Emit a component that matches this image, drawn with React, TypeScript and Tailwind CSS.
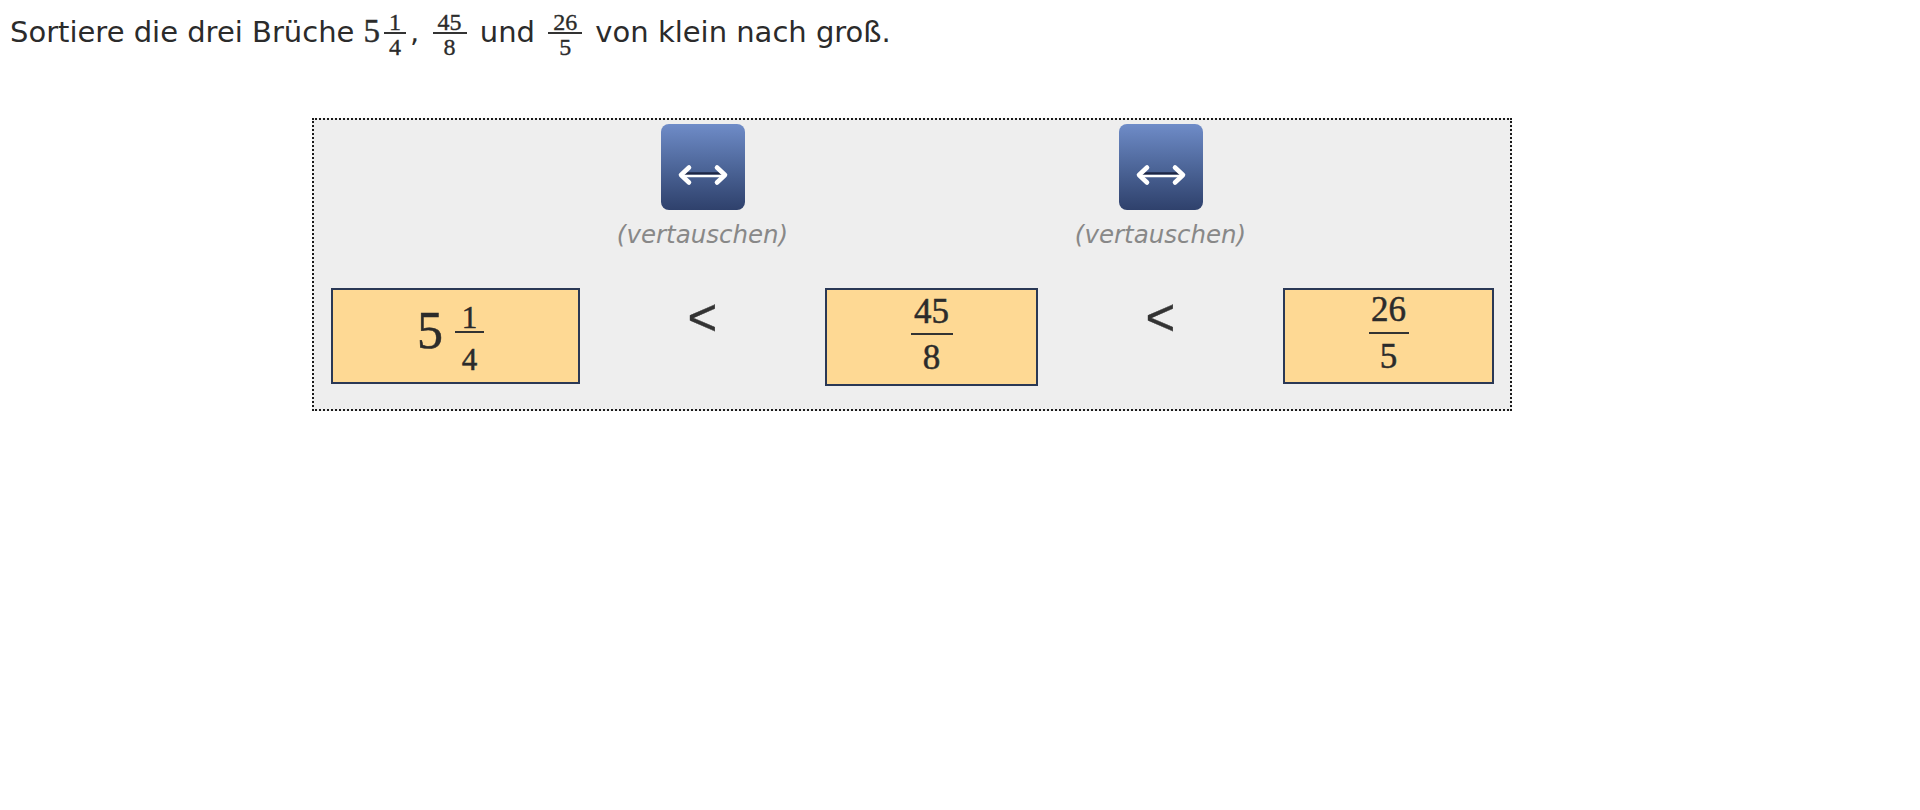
import React from "react";

function QFrac({ n, d }: { n: string; d: string }) {
  return (
    <span className="inline-flex flex-col items-center align-middle mx-[4px] font-['Liberation_Serif',serif] text-[#2b2b2b] [-webkit-text-stroke:0.35px_#2b2b2b]">
      <span className="text-[24px] leading-[20px] px-[5px]">{n}</span>
      <span className="block h-[1.5px] w-full bg-[#333]"></span>
      <span className="text-[24px] leading-[20px] mt-[3px]">{d}</span>
    </span>
  );
}

function SwapButton() {
  return (
    <div className="flex flex-col items-center">
      <div className="w-[84px] h-[86px] rounded-[8px] bg-linear-to-b from-[#6f8cc8] via-[#4d6699] to-[#2f416c] flex justify-center pt-[40px]">
        <svg width="52" height="22" viewBox="0 0 52 22">
          <line x1="6" y1="9.5" x2="46" y2="9.5" stroke="#1d2644" strokeWidth="2.5" />
          <line x1="6" y1="12" x2="46" y2="12" stroke="#ffffff" strokeWidth="2.6" />
          <polyline points="12,3.5 4,11 12,18.5" fill="none" stroke="#ffffff" strokeWidth="4.6" strokeLinecap="round" strokeLinejoin="round" />
          <polyline points="40,3.5 48,11 40,18.5" fill="none" stroke="#ffffff" strokeWidth="4.6" strokeLinecap="round" strokeLinejoin="round" />
        </svg>
      </div>
      <div className="mt-[10px] text-[24.5px] leading-[30px] italic text-[#888888]">(vertauschen)</div>
    </div>
  );
}

function Less() {
  return (
    <div className="flex justify-center">
      <span className="mt-[5px] font-['Liberation_Sans',sans-serif] text-[51px] leading-[50px] text-[#333] [-webkit-text-stroke:0.4px_#333]">&lt;</span>
    </div>
  );
}

export default function App() {
  return (
    <div className="min-h-[810px] w-[1920px] bg-white font-['DejaVu_Sans',sans-serif] text-[#2b2b2b]">
      <div className="h-[118px] pl-[10px] pt-[12px]">
        <p className="text-[29px] leading-[28px] whitespace-nowrap">
          Sortiere die drei Brüche{" "}
          <span className="font-['Liberation_Serif',serif] text-[33px] [-webkit-text-stroke:0.4px_#2b2b2b]">5</span>
          <QFrac n="1" d="4" />, <QFrac n="45" d="8" /> und <QFrac n="26" d="5" /> von klein nach groß.
        </p>
      </div>

      <div className="ml-[312px] w-[1200px] h-[293px] border-2 border-dotted border-[#1a1a1a] bg-[#eeeeee] pl-[17px] pr-[16px] pt-[4px]">
        <div className="grid grid-cols-[249px_245px_213px_245px_211px]">
          <div></div>
          <SwapButton />
          <div></div>
          <SwapButton />
          <div></div>
        </div>

        <div className="mt-[38px] grid grid-cols-[249px_245px_213px_245px_211px] items-start font-['Liberation_Serif',serif] text-[#2b2b2b] [-webkit-text-stroke:0.5px_#2b2b2b]">
          {/* card 1 */}
          <div className="h-[96px] border-2 border-[#2a3855] bg-[#fed994] flex justify-center pr-[10px]">
            <span className="mt-[15px] text-[52px] leading-[52px]">5</span>
            <div className="ml-[12px] flex flex-col items-center">
              <span className="mt-[15px] text-[31px] leading-[26px] px-[6px]">1</span>
              <span className="block h-[2px] w-[29px] bg-[#333]"></span>
              <span className="mt-[14px] text-[31px] leading-[26px]">4</span>
            </div>
          </div>

          <Less />

          {/* card 2 */}
          <div className="h-[98px] border-2 border-[#2a3855] bg-[#fed994] flex justify-center">
            <div className="flex flex-col items-center">
              <span className="mt-[4px] text-[35px] leading-[35px] px-[3px]">45</span>
              <span className="mt-[4px] block h-[2px] w-[42px] bg-[#333]"></span>
              <span className="mt-[5px] text-[35px] leading-[35px]">8</span>
            </div>
          </div>

          <Less />

          {/* card 3 */}
          <div className="h-[96px] border-2 border-[#2a3855] bg-[#fed994] flex justify-center">
            <div className="flex flex-col items-center">
              <span className="mt-[2px] text-[35px] leading-[35px] px-[3px]">26</span>
              <span className="mt-[5px] block h-[2px] w-[40px] bg-[#333]"></span>
              <span className="mt-[5px] text-[35px] leading-[35px]">5</span>
            </div>
          </div>
        </div>
      </div>
    </div>
  );
}
